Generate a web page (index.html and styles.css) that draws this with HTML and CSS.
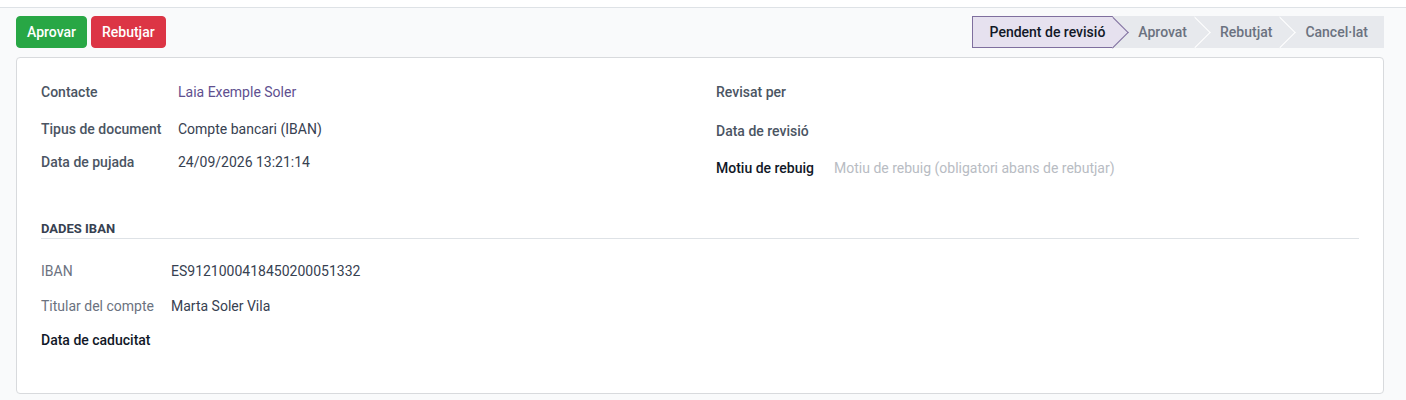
FILE: index.html
```html
<!DOCTYPE html>
<html lang="ca">
<head>
  <meta charset="UTF-8">
  <title>Document pendent de revisió</title>
  <link rel="stylesheet" href="styles.css">
</head>
<body>
  <div class="topline"></div>

  <div class="sheet-wrap">
    <!-- action buttons + state bar -->
    <div class="header">
      <div class="actions">
        <button class="btn btn-ok">Aprovar</button>
        <button class="btn btn-ko">Rebutjar</button>
      </div>
      <div class="statusbar">
        <span class="step current">Pendent de revisió</span>
        <span class="step">Aprovat</span>
        <span class="step">Rebutjat</span>
        <span class="step last">Cancel·lat</span>
      </div>
    </div>

    <div class="sheet">
      <div class="groups">
        <div class="group left">
          <div class="row r1">
            <span class="label">Contacte</span>
            <a class="value link" href="#">Laia Exemple Soler</a>
          </div>
          <div class="row r2">
            <span class="label">Tipus de document</span>
            <span class="value">Compte bancari (IBAN)</span>
          </div>
          <div class="row r3">
            <span class="label">Data de pujada</span>
            <span class="value">24/09/2026 13:21:14</span>
          </div>
        </div>
        <div class="group right">
          <div class="row r1">
            <span class="label">Revisat per</span>
            <span class="value"></span>
          </div>
          <div class="row r2b">
            <span class="label">Data de revisió</span>
            <span class="value"></span>
          </div>
          <div class="row r3">
            <span class="label strong">Motiu de rebuig</span>
            <span class="value placeholder">Motiu de rebuig (obligatori abans de rebutjar)</span>
          </div>
        </div>
      </div>

      <div class="separator">DADES IBAN</div>

      <div class="group iban">
        <div class="row">
          <span class="label soft">IBAN</span>
          <span class="value">ES9121000418450200051332</span>
        </div>
        <div class="row">
          <span class="label soft">Titular del compte</span>
          <span class="value">Marta Soler Vila</span>
        </div>
        <div class="row">
          <span class="label strong">Data de caducitat</span>
          <span class="value"></span>
        </div>
      </div>
    </div>
  </div>
</body>
</html>
```

FILE: styles.css
```css
* {
  margin: 0;
  padding: 0;
  box-sizing: border-box;
}

body {
  background-color: #f9fafb;
  font: 14px Roboto, "Noto Sans", sans-serif;
  color: #374151;
  height: 400px;
  overflow: hidden;
}

.topline {
  height: 8px;
  background-color: #ffffff;
  border-bottom: 1px solid #dee2e6;
}

.sheet-wrap {
  padding: 8px 22px 0 16px;
}

.header {
  display: flex;
  justify-content: space-between;
  align-items: center;
  height: 32px;
}

.actions {
  display: flex;
  gap: 4px;
}

.btn {
  font: 500 14px Roboto, sans-serif;
  color: white;
  border: 1px solid transparent;
  border-radius: 4px;
  height: 32px;
  padding: 0 10px;
}

.btn-ok {
  background-color: #28a745;
  border-color: #28a745;
}

.btn-ko {
  background-color: #dc3545;
  border-color: #dc3545;
}

/* chevron steps */
.statusbar {
  display: flex;
  height: 32px;
  background-color: #e7e9ed;
  border-radius: 2px;
}

.step {
  position: relative;
  display: flex;
  align-items: center;
  height: 32px;
  padding: 0 8px 0 25px;
  font-weight: 500;
  color: #6b7280;
  background-color: #e7e9ed;
  white-space: nowrap;
}

/* only the right half of the turned square shows, as the arrow tip */
.step::after {
  content: "";
  position: absolute;
  top: 5px;
  right: -11px;
  width: 22px;
  height: 22px;
  background-color: inherit;
  border-top: 1px solid #ffffff;
  border-right: 1px solid #ffffff;
  transform: rotate(45deg);
  clip-path: polygon(-2px -2px, calc(100% + 2px) -2px, calc(100% + 2px) calc(100% + 2px));
  z-index: 1;
}

.step.last::after {
  display: none;
}

.step.last {
  padding-right: 16px;
}

.step.current {
  color: #111827;
  background-color: #e6e1ef;
  border: 1px solid #7f6f9e;
  border-right: none;
  padding-left: 17px;
  padding-right: 8px;
  z-index: 2;
}

.step.current::after {
  top: 4px;
  border-color: #7f6f9e;
}

.sheet {
  margin-top: 9px;
  background-color: #ffffff;
  border: 1px solid #d8dadd;
  border-radius: 4px;
  height: 337px;
  padding: 24px 24px 0 24px;
}

.groups {
  display: grid;
  grid-template-columns: 1fr 1fr;
  column-gap: 32px;
}

.row {
  display: grid;
  grid-template-columns: 137px 1fr;
  align-items: start;
  min-height: 36px;
  line-height: 20px;
}

.group.left .r1 { min-height: 37px; }
.group.left .r2 { min-height: 33px; }
.group.right .row { grid-template-columns: 118px 1fr; }
.group.right .r1 { min-height: 39px; }
.group.right .r2b { min-height: 34px; }
.group.right .r3 { padding-top: 3px; }

.label {
  font-weight: 500;
  color: #4b5563;
}

.label.strong {
  color: #111827;
}

.label.soft {
  font-weight: 400;
  color: #6b7280;
}

.value {
  color: #374151;
}

.link {
  color: #604f8f;
  text-decoration: none;
}

.placeholder {
  color: #b8bcc3;
}

.separator {
  margin-top: 30px;
  padding-bottom: 1px;
  border-bottom: 1px solid #dee2e6;
  font-size: 13px;
  font-weight: 700;
  color: #374151;
  line-height: 16px;
}

.group.iban {
  margin-top: 22px;
}

.group.iban .row {
  grid-template-columns: 130px 1fr;
  min-height: 35px;
}

.group.iban .row:nth-child(2) {
  min-height: 34px;
}
```
